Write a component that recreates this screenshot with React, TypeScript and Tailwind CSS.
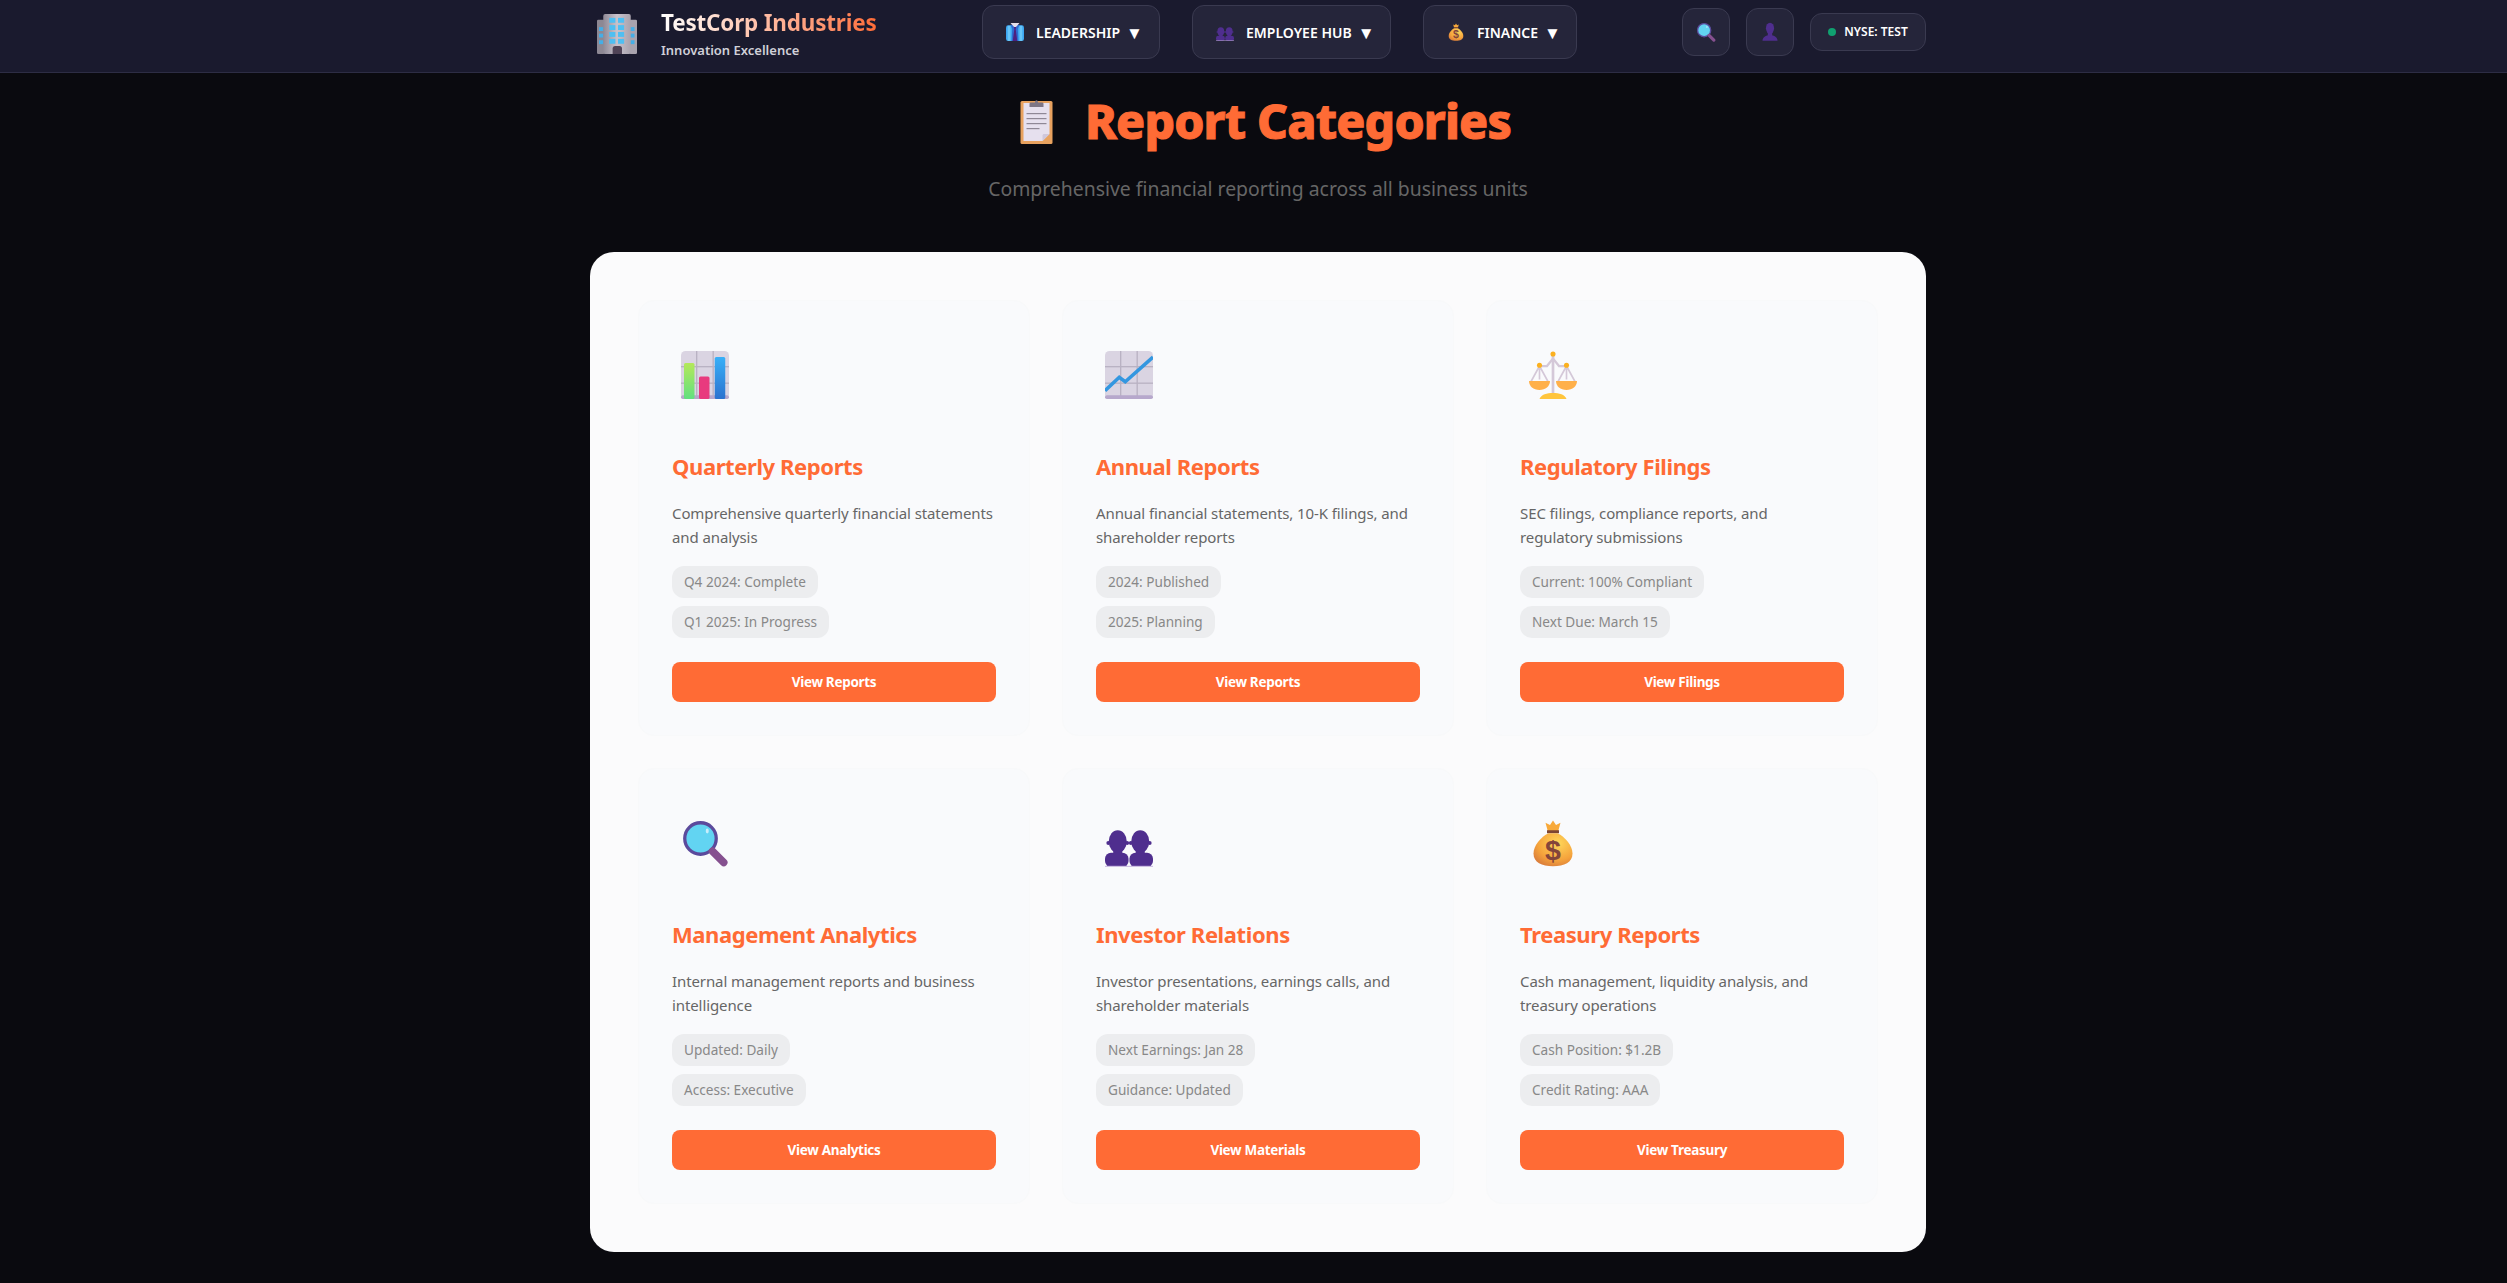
import React from 'react';

const BuildingIcon = ({ className }: { className?: string }) => (
  <svg viewBox="0 0 32 32" className={className}>
    <defs>
      <linearGradient id="bld" x1="0" y1="0" x2="1" y2="0">
        <stop offset="0" stopColor="#8f8a96" />
        <stop offset="0.5" stopColor="#c8c2cc" />
        <stop offset="1" stopColor="#a9a3ae" />
      </linearGradient>
    </defs>
    <rect x="0" y="4.500" width="6" height="27.500" rx="1" fill="#8d8893" />
    <rect x="26" y="4.500" width="6" height="27.500" rx="1" fill="#a9a3ae" />
    <rect x="5" y="0" width="22" height="32" rx="1.500" fill="url(#bld)" />
    {[3.1, 8.9, 14.4, 19.9].map((y) => (
      <g key={y} fill="#4fbff2">
        <rect x="9.800" y={y} width="4.900" height="3.900" />
        <rect x="16.800" y={y} width="4.900" height="3.900" />
      </g>
    ))}
    {[10.5, 15.7, 21].map((y) => (
      <g key={y} fill="#45aee6">
        <rect x="1.600" y={y} width="3.300" height="3.100" />
        <rect x="27" y={y} width="3" height="3.100" />
      </g>
    ))}
    <path d="M12.500 32v-4.500a2 2 0 0 1 2-2h3.500a2 2 0 0 1 2 2V32z" fill="#4f4356" />
  </svg>
);

const SuitIcon = ({ className }: { className?: string }) => (
  <svg viewBox="0 0 32 32" className={className}>
    <rect x="0" y="4" width="32" height="28" rx="4" fill="#3ca6f2" />
    <rect x="3" y="5" width="5" height="27" fill="#66c4f8" />
    <rect x="24" y="5" width="5" height="27" fill="#66c4f8" />
    <path d="M8 3h16l-3 7 1 22H10l1-22z" fill="#2f6ad0" />
    <path d="M8 0h16l-8 9z" fill="#e6dfea" />
    <path d="M14 7h4l-.8 3.500L20 32h-8l2.800-21.500z" fill="#4d1f80" />
  </svg>
);

const PeopleIcon = ({ className }: { className?: string }) => (
  <svg viewBox="0 0 32 32" className={className}>
    <g fill="#4f2e8e">
      <ellipse cx="8.500" cy="15" rx="6" ry="7.500" />
      <circle cx="2.200" cy="16" r="1.300" />
      <circle cx="14.800" cy="16" r="1.300" />
      <rect x="0" y="22.500" width="15.700" height="9.500" rx="4" />
      <rect x="5.500" y="20" width="6" height="4" />
      <ellipse cx="23.500" cy="15" rx="6" ry="7.500" />
      <circle cx="17.200" cy="16" r="1.300" />
      <circle cx="29.800" cy="16" r="1.300" />
      <rect x="16.300" y="22.500" width="15.700" height="9.500" rx="4" />
      <rect x="20.500" y="20" width="6" height="4" />
    </g>
    <rect x="0" y="31.200" width="32" height="0.800" fill="#cdbfe3" />
  </svg>
);

const BagIcon = ({ className }: { className?: string }) => (
  <svg viewBox="0 0 32 32" className={className}>
    <defs>
      <radialGradient id="bag" cx="0.62" cy="0.3" r="0.85">
        <stop offset="0" stopColor="#ffd75a" />
        <stop offset="0.6" stopColor="#f5a33c" />
        <stop offset="1" stopColor="#d1703a" />
      </radialGradient>
    </defs>
    <path d="M11 2.500l3 1.500L16 1l2 3 3-1.500L19.500 8h-7z" fill="#f8a93a" />
    <rect x="12" y="7.500" width="8" height="2" fill="#7d4533" />
    <path d="M13 9.500h6c5 2.500 10 8 10 13.500 0 6-5.500 8.500-13 8.500S3 29 3 23c0-5.500 5-11 10-13.500z" fill="url(#bag)" />
    <text x="16" y="27.500" textAnchor="middle" fontSize="19" fontWeight="700" fill="#84453a" fontFamily="'Liberation Sans', sans-serif">$</text>
  </svg>
);

const SearchIcon = ({ className }: { className?: string }) => (
  <svg viewBox="0 0 32 32" className={className}>
    <circle cx="13" cy="13" r="10.500" fill="#62d4f2" stroke="#5b4a9c" strokeWidth="2.200" />
    <ellipse cx="17.500" cy="8" rx="1" ry="1.600" fill="#c8eefb" />
    <path d="M21 21.500l7.500 7.500" stroke="#85508f" strokeWidth="5" strokeLinecap="round" />
  </svg>
);

const BustIcon = ({ className }: { className?: string }) => (
  <svg viewBox="0 0 32 32" className={className}>
    <g fill="#4f2e8e">
      <ellipse cx="16" cy="10" rx="6.500" ry="9" />
      <rect x="12.500" y="15" width="7" height="8" />
      <path d="M4 30c0-6 5-9 12-9s12 3 12 9z" />
    </g>
  </svg>
);

const ClipboardIcon = ({ className }: { className?: string }) => (
  <svg viewBox="0 0 32 46" className={className}>
    <rect x="0" y="3" width="32" height="43" rx="1.500" fill="#e8a25f" />
    <path d="M3 5h26v31l-7 7H3z" fill="#e6e0ee" />
    <path d="M22 43l7-7h-6l-1 1z" fill="#cfc7db" />
    <path d="M10 4.500h4.500c0-3 3-3 3 0H22a1.500 1.500 0 0 1 1 1.500v3H9V6a1.500 1.500 0 0 1 1-1.500z" fill="#7e7686" />
    <g fill="#8f8896">
      <rect x="6" y="15" width="20" height="1.200" />
      <rect x="6" y="20" width="20" height="1.200" />
      <rect x="6" y="25" width="20" height="1.200" />
      <rect x="6" y="30" width="13" height="1.200" />
    </g>
  </svg>
);

const Grid = () => (
  <g>
    <rect x="0" y="0" width="32" height="32" rx="3" fill="#dad4e2" />
    <g fill="#b9b2c3">
      <rect x="10" y="0" width="0.900" height="32" />
      <rect x="21" y="0" width="0.900" height="32" />
      <rect x="0" y="10" width="32" height="0.900" />
      <rect x="0" y="21" width="32" height="0.900" />
    </g>
    <rect x="0" y="29.500" width="32" height="2.500" rx="1.200" fill="#b7a8cc" />
  </g>
);

const BarsIcon = ({ className }: { className?: string }) => (
  <svg viewBox="0 0 32 32" className={className}>
    <defs>
      <linearGradient id="g1" x1="0" y1="0" x2="0" y2="1">
        <stop offset="0" stopColor="#b4e85a" />
        <stop offset="1" stopColor="#62e080" />
      </linearGradient>
      <linearGradient id="g2" x1="0" y1="0" x2="0" y2="1">
        <stop offset="0" stopColor="#38b0f8" />
        <stop offset="1" stopColor="#2b72cf" />
      </linearGradient>
    </defs>
    <Grid />
    <rect x="2" y="8" width="7" height="24" rx="1" fill="url(#g1)" />
    <rect x="12" y="17" width="7" height="15" rx="1" fill="#e83a7e" />
    <rect x="22.500" y="4" width="7" height="28" rx="1" fill="url(#g2)" />
  </svg>
);

const ChartIcon = ({ className }: { className?: string }) => (
  <svg viewBox="0 0 32 32" className={className}>
    <Grid />
    <path d="M0 26.500l9.500-9 4 3L32 4" fill="none" stroke="#3497e0" strokeWidth="2.400" />
  </svg>
);

const ScalesIcon = ({ className }: { className?: string }) => (
  <svg viewBox="0 0 32 32" className={className}>
    <g stroke="#d4c8d8" fill="none" strokeWidth="1.100">
      <path d="M16 3v25" strokeWidth="1.800" />
      <path d="M7 10h5l4-5 4 5h5" strokeWidth="1.500" />
      <path d="M7 10v9M7 10L1 21M7 10l6 11M25 10v9M25 10l-6 11M25 10l6 11" />
    </g>
    <path d="M0 20h14c0 3.500-3 6-7 6s-7-2.500-7-6zM18 20h14c0 3.500-3 6-7 6s-7-2.500-7-6z" fill="#ffb04a" />
    <path d="M7 32c1-3 5-4 9-4s8 1 9 4z" fill="#ffc53d" />
    <g fill="#fbb01f">
      <circle cx="16" cy="2" r="1.700" />
      <circle cx="7" cy="9.500" r="1.700" />
      <circle cx="25" cy="9.500" r="1.700" />
    </g>
  </svg>
);

const navItems = [
  { label: 'Leadership', Icon: SuitIcon, width: 'w-[178px]' },
  { label: 'Employee Hub', Icon: PeopleIcon, width: 'w-[199px]' },
  { label: 'Finance', Icon: BagIcon, width: 'w-[154px]' },
];

const categories = [
  { title: 'Quarterly Reports', desc: 'Comprehensive quarterly financial statements and analysis', tags: ['Q4 2024: Complete', 'Q1 2025: In Progress'], cta: 'View Reports', Icon: BarsIcon },
  { title: 'Annual Reports', desc: 'Annual financial statements, 10-K filings, and shareholder reports', tags: ['2024: Published', '2025: Planning'], cta: 'View Reports', Icon: ChartIcon },
  { title: 'Regulatory Filings', desc: 'SEC filings, compliance reports, and\nregulatory submissions', tags: ['Current: 100% Compliant', 'Next Due: March 15'], cta: 'View Filings', Icon: ScalesIcon },
  { title: 'Management Analytics', desc: 'Internal management reports and business intelligence', tags: ['Updated: Daily', 'Access: Executive'], cta: 'View Analytics', Icon: SearchIcon },
  { title: 'Investor Relations', desc: 'Investor presentations, earnings calls, and shareholder materials', tags: ['Next Earnings: Jan 28', 'Guidance: Updated'], cta: 'View Materials', Icon: PeopleIcon },
  { title: 'Treasury Reports', desc: 'Cash management, liquidity analysis, and treasury operations', tags: ['Cash Position: $1.2B', 'Credit Rating: AAA'], cta: 'View Treasury', Icon: BagIcon },
];

export default function App() {
  return (
    <div className="h-screen overflow-hidden bg-[#0a0a0f] font-['Noto_Sans',sans-serif]">
      <header className="h-[73px] border-b border-[#2d2d44] bg-[#1a1a2e]">
        <div className="ml-[590px] flex h-[72px] w-[1336px] items-center pb-2">
          <div className="flex w-[292px] items-center pt-[4px] pl-[7px]">
            <BuildingIcon className="h-10 w-10" />
            <div className="ml-[24px] pb-[2px]">
              <div className="bg-gradient-to-r from-white to-[#ff6b35] bg-clip-text text-[22.500px] leading-[30px] font-bold tracking-[-0.2px] text-transparent">
                TestCorp Industries
              </div>
              <div className="mt-[3px] text-[13px] leading-[18px] font-semibold text-[#d0d0d8]">Innovation Excellence</div>
            </div>
          </div>

          <nav className="ml-[100px] flex gap-8">
            {navItems.map(({ label, Icon, width }) => (
              <button key={label} className={`flex h-[54px] items-center rounded-xl border border-[#3a3a50] bg-[#25253a] pl-[23px] text-[14px] font-semibold whitespace-nowrap text-white uppercase ${width}`}>
                <Icon className="h-[18px] w-[18px]" />
                <span className="ml-3">{label}</span>
                <span className="ml-[6px] text-[17px] leading-none">▼</span>
              </button>
            ))}
          </nav>

          <div className="ml-[105px] flex items-center gap-4">
            <button className="flex h-12 w-12 items-center justify-center rounded-xl border border-[#3a3a50] bg-[#25253a]">
              <SearchIcon className="h-5 w-5" />
            </button>
            <button className="flex h-12 w-12 items-center justify-center rounded-xl border border-[#3a3a50] bg-[#25253a]">
              <BustIcon className="h-5 w-5" />
            </button>
            <div className="flex h-[38px] w-[116px] items-center justify-center gap-2 rounded-xl border border-[#3a3a50] bg-[#25253a] text-[12px] font-semibold text-white">
              <span className="h-2 w-2 rounded-full bg-[#10a070]" />
              NYSE: TEST
            </div>
          </div>
        </div>
      </header>

      <main className="ml-[590px] w-[1336px]">
        <div className="flex items-center justify-center pt-[18px] pl-[13px]">
          <ClipboardIcon className="h-[46px] w-[37px]" />
          <h1 className="ml-[30px] text-[48px] leading-[60px] font-extrabold tracking-[-0.8px] text-[#ff6b35] [-webkit-text-stroke:1px_#ff6b35]">Report Categories</h1>
        </div>
        <p className="mt-[24px] text-center text-[19.400px] leading-[28px] text-[#666666]">Comprehensive financial reporting across all business units</p>

        <section className="mt-[49px] grid grid-cols-3 gap-8 rounded-3xl bg-[#fbfbfc] p-12">
          {categories.map(({ title, desc, tags, cta, Icon }) => (
            <article key={title} className="flex h-[436px] flex-col rounded-2xl border border-[#f8f9fa] bg-[#f9fafc] p-[33px]">
              <div className="mt-[17px] ml-[9px] h-12 w-12">
                <Icon className="h-12 w-12" />
              </div>
              <h3 className="mt-[51px] text-[22px] leading-[32px] font-bold tracking-[-0.4px] text-[#ff6b35]">{title}</h3>
              <p className="mt-[19px] text-[15px] leading-[24px] tracking-[-0.1px] whitespace-pre-line text-[#666666]">{desc}</p>
              <div className="mt-[17px] flex flex-col items-start gap-2">
                {tags.map((tag) => (
                  <span key={tag} className="rounded-xl bg-[#ecedef] px-[12px] py-[6px] text-[13.600px] leading-[20px] text-[#888888]">{tag}</span>
                ))}
              </div>
              <button className="mt-[24px] h-[41px] w-full rounded-lg bg-[#ff6b35] text-[13.500px] font-bold tracking-[-0.3px] text-white">{cta}</button>
            </article>
          ))}
        </section>
      </main>
    </div>
  );
}
